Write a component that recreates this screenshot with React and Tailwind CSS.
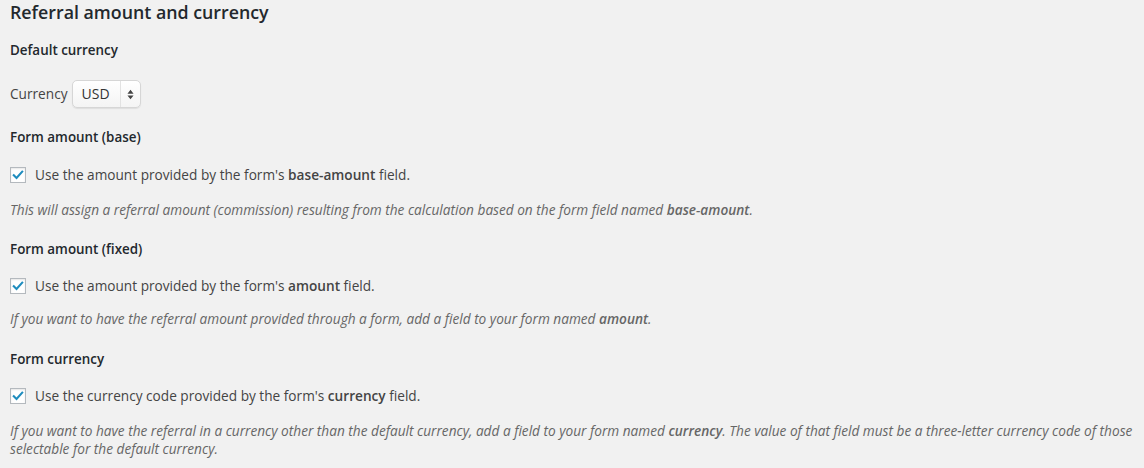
function Check() {
  return (
    <span className="flex h-4 w-4 shrink-0 items-center justify-center border border-[#b4b9be] bg-white shadow-[inset_0_1px_2px_rgba(0,0,0,0.1)]">
      <svg viewBox="0 0 16 16" className="h-[14px] w-[14px]">
        <path d="M3.2 8.4 L6.3 11.4 L12.8 4.2" fill="none" stroke="#1e8cbe" strokeWidth="2.4" strokeLinecap="square" />
      </svg>
    </span>
  )
}

function Heading({ children, className }) {
  return <h3 className={`text-[13.4px] font-semibold leading-[18px] text-[#23282d] ${className}`}>{children}</h3>
}

function App() {
  return (
    <main className="min-h-screen bg-[#f1f1f1] px-[10px] font-['Open_Sans',sans-serif] text-[13.65px] leading-[18px] text-[#444]">
      <h2 className="text-[17.8px] font-semibold leading-6 text-[#23282d]">Referral amount and currency</h2>

      <Heading className="mt-[17px]">Default currency</Heading>
      <div className="mt-[21px] flex h-7 items-center gap-[4px]">
        <span>Currency</span>
        <div className="flex h-7 w-[69px] items-center rounded-[5px] border border-[#d6d6d6] bg-gradient-to-b from-white to-[#f4f4f4] shadow-[0_1px_1px_rgba(0,0,0,0.08)]">
          <span className="flex-1 pl-[9px] text-[14px] font-medium text-[#333]">USD</span>
          <span className="flex h-full w-[20px] items-center justify-center border-l border-[#e2e2e2]">
            <svg viewBox="0 0 8 12" className="h-[11px] w-[7px]">
              <path d="M4 0.5 L7.5 5 L0.5 5 Z M4 11.5 L7.5 7 L0.5 7 Z" fill="#444" />
            </svg>
          </span>
        </div>
      </div>

      <Heading className="mt-[20px]">Form amount (base)</Heading>
      <label className="mt-[21px] flex h-4 items-center gap-[9px]">
        <Check />
        <span>
          Use the amount provided by the form's <b className="font-semibold">base-amount</b> field.
        </span>
      </label>
      <p className="mt-[18px] italic text-[#666]">
        This will assign a referral amount (commission) resulting from the calculation based on the form field named{' '}
        <b className="font-semibold">base-amount</b>.
      </p>

      <Heading className="mt-[21px]">Form amount (fixed)</Heading>
      <label className="mt-[20px] flex h-4 items-center gap-[9px]">
        <Check />
        <span>
          Use the amount provided by the form's <b className="font-semibold">amount</b> field.
        </span>
      </label>
      <p className="mt-[16px] italic text-[#666]">
        If you want to have the referral amount provided through a form, add a field to your form named{' '}
        <b className="font-semibold">amount</b>.
      </p>

      <Heading className="mt-[22px]">Form currency</Heading>
      <label className="mt-[20px] flex h-4 items-center gap-[9px]">
        <Check />
        <span>
          Use the currency code provided by the form's <b className="font-semibold">currency</b> field.
        </span>
      </label>
      <p className="mt-[18px] italic text-[#666]">
        If you want to have the referral in a currency other than the default currency, add a field to your form named{' '}
        <b className="font-semibold">currency</b>. The value of that field must be a three-letter currency code of those
        selectable for the default currency.
      </p>
    </main>
  )
}

export default App
